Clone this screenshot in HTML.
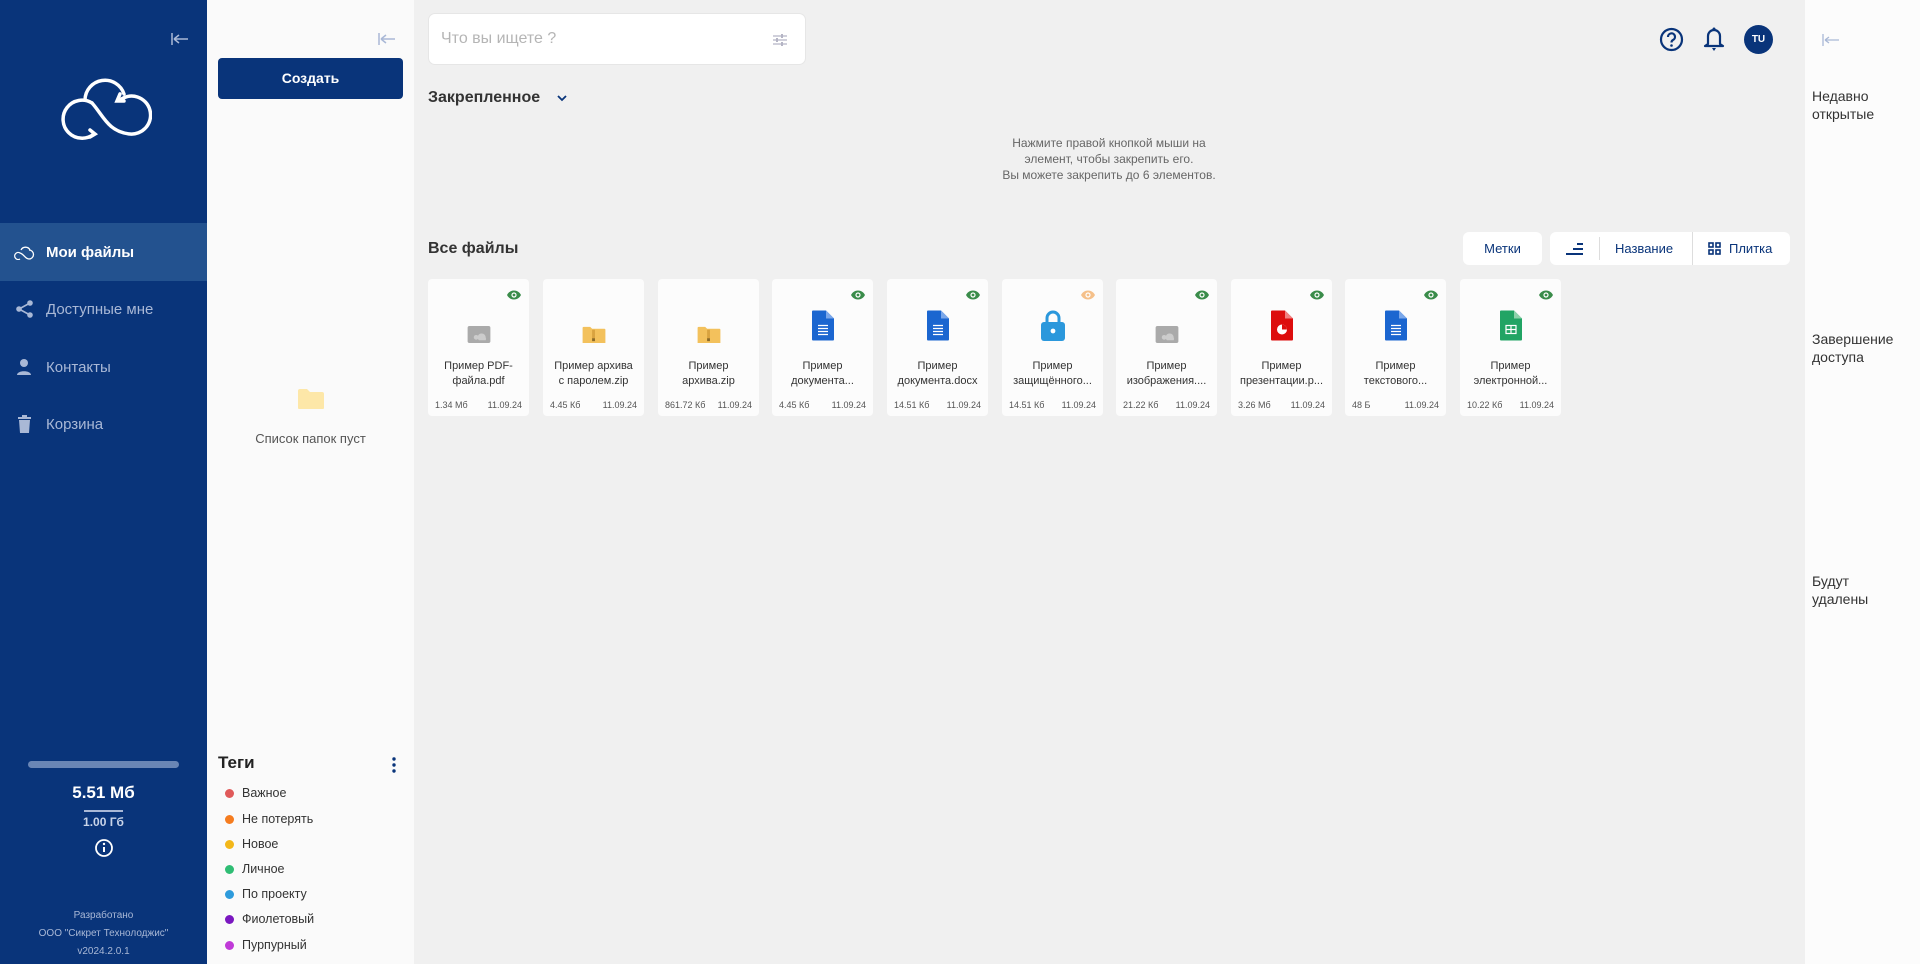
<!DOCTYPE html>
<html><head><meta charset="utf-8"><style>
*{box-sizing:border-box;margin:0;padding:0}
body{width:1920px;height:964px;overflow:hidden;font-family:"Liberation Sans","Noto Sans CJK SC",sans-serif;background:#f0f0f0;position:relative;color:#333}
.abs{position:absolute}
#side{left:0;top:0;width:207px;height:964px;background:#09347a}
#fold{left:207px;top:0;width:207px;height:964px;background:#fafafa}
#right{left:1805px;top:0;width:115px;height:964px;background:#fcfcfc}
.nav{position:absolute;left:0;width:207px;height:58px;display:flex;align-items:center;padding-left:14px;font-size:15px;color:#a9b8d6}
.nav svg{margin-right:10px}
.card{position:absolute;top:279px;width:101px;height:137px;background:#fcfcfc;border-radius:4px}
.card .t{position:absolute;top:80px;left:4px;right:4px;text-align:center;font-size:11px;line-height:15px;color:#333}
.card .m{position:absolute;top:121px;left:7px;right:7px;display:flex;justify-content:space-between;font-size:9px;color:#555}
.card .eye{position:absolute;right:8px;top:11px}
.card .ic{position:absolute;left:50%;top:31px;transform:translateX(-50%)}
.tag{position:absolute;left:225px;font-size:12.5px;color:#333;display:flex;align-items:center}
.tag i{width:9px;height:9px;border-radius:50%;margin-right:8px;display:inline-block}
.rt{position:absolute;left:1812px;font-size:14px;line-height:18px;color:#333}
</style></head><body>
<div id="side" class="abs">
 <svg class="abs" style="left:170px;top:32px" width="20" height="14" viewBox="0 0 20 14"><path d="M2 1v12M4 7h14M4 7l5-4M4 7l5 4" stroke="#a9b8d6" stroke-width="1.5" fill="none"/></svg>
 <svg class="abs" style="left:58px;top:70px" width="94" height="72" viewBox="0 0 94 72"><g stroke="#fff" stroke-width="3.5" fill="none" stroke-linecap="round"><path d="M27 30 A20 20 0 0 1 66 24"/><path d="M34 33 C45 45 50 62 72 64 A19 19 0 1 0 62 30"/><path d="M34 33 A19 19 0 1 0 36 64"/><path d="M32 60l5 4-5 3M62 24l-3 7 7 0"/></g></svg>
 <div class="nav" style="top:223px;background:#23528f;color:#fff;font-weight:bold"><svg width="22" height="16" viewBox="0 0 22 16"><path d="M7 6A5 5 0 0 1 16 6 M15 6a4.5 4.5 0 1 1 0 9c-4 0-5-5-9-6a3.5 3.5 0 1 0 0 6" stroke="#fff" stroke-width="1.3" fill="none"/></svg>Мои файлы</div>
 <div class="nav" style="top:280px"><svg width="22" height="20" viewBox="0 0 22 20"><circle cx="16" cy="4" r="2.8" fill="#a9b8d6"/><circle cx="5" cy="10" r="2.8" fill="#a9b8d6"/><circle cx="16" cy="16" r="2.8" fill="#a9b8d6"/><path d="M16 4L5 10l11 6" stroke="#a9b8d6" stroke-width="1.6" fill="none"/></svg>Доступные мне</div>
 <div class="nav" style="top:338px"><svg width="22" height="18" viewBox="0 0 22 18"><circle cx="10" cy="5" r="4" fill="#a9b8d6"/><path d="M3 17c0-5 14-5 14 0z" fill="#a9b8d6"/></svg>Контакты</div>
 <div class="nav" style="top:395px"><svg width="22" height="20" viewBox="0 0 22 20"><path d="M4 3h13v2H4zM8 1h5v2H8zM5 6h11l-1 13H6z" fill="#a9b8d6"/></svg>Корзина</div>
 <div class="abs" style="left:28px;top:761px;width:151px;height:7px;border-radius:4px;background:#6a86b5"></div>
 <div class="abs" style="left:0;width:207px;top:783px;text-align:center;color:#fff;font-weight:bold;font-size:17px">5.51 Мб</div>
 <div class="abs" style="left:84px;top:810px;width:39px;height:2px;background:#a9b8d6"></div>
 <div class="abs" style="left:0;width:207px;top:815px;text-align:center;color:#c9d4e8;font-weight:bold;font-size:12px">1.00 Гб</div>
 <svg class="abs" style="left:94px;top:838px" width="20" height="20" viewBox="0 0 20 20"><circle cx="10" cy="10" r="8" stroke="#fff" stroke-width="1.8" fill="none"/><path d="M10 9v5" stroke="#fff" stroke-width="2"/><circle cx="10" cy="6" r="1.2" fill="#fff"/></svg>
 <div class="abs" style="left:0;width:207px;top:907px;text-align:center;color:#a9b8d6;font-size:10px;line-height:18px">Разработано<br>ООО "Сикрет Технолоджис"<br>v2024.2.0.1</div>
</div>
<div id="fold" class="abs">
 <svg class="abs" style="left:170px;top:32px" width="20" height="14" viewBox="0 0 20 14"><path d="M2 1v12M4 7h14M4 7l5-4M4 7l5 4" stroke="#a9b8d6" stroke-width="1.5" fill="none"/></svg>
 <div class="abs" style="left:11px;top:58px;width:185px;height:41px;border-radius:4px;background:#09347a;color:#fff;font-weight:bold;font-size:14px;text-align:center;line-height:41px">Создать</div>
 <svg class="abs" style="left:90px;top:388px" width="28" height="22" viewBox="0 0 28 22"><path d="M1 3a2 2 0 0 1 2-2h7l3 3h12a2 2 0 0 1 2 2v14a1 1 0 0 1-1 1H2a1 1 0 0 1-1-1z" fill="#fde7a8"/></svg>
 <div class="abs" style="left:0;width:207px;top:431px;text-align:center;font-size:13px;color:#555">Список папок пуст</div>
 <div class="abs" style="left:11px;top:753px;font-size:17px;font-weight:bold;color:#222">Теги</div>
 <svg class="abs" style="left:184px;top:756px" width="6" height="18" viewBox="0 0 6 18"><circle cx="3" cy="3" r="1.7" fill="#09347a"/><circle cx="3" cy="9" r="1.7" fill="#09347a"/><circle cx="3" cy="15" r="1.7" fill="#09347a"/></svg>
</div>
<div class="tag" style="top:786px"><i style="background:#e05a5a"></i>Важное</div>
<div class="tag" style="top:812px"><i style="background:#f57c1f"></i>Не потерять</div>
<div class="tag" style="top:837px"><i style="background:#f3b719"></i>Новое</div>
<div class="tag" style="top:862px"><i style="background:#2fbd74"></i>Личное</div>
<div class="tag" style="top:887px"><i style="background:#2e9bdc"></i>По проекту</div>
<div class="tag" style="top:912px"><i style="background:#7a17c0"></i>Фиолетовый</div>
<div class="tag" style="top:938px"><i style="background:#c03ad8"></i>Пурпурный</div>

<div class="abs" style="left:428px;top:13px;width:378px;height:52px;background:#fff;border:1px solid #e6e6e6;border-radius:7px"></div>
<div class="abs" style="left:441px;top:30px;font-size:16px;color:#b5b5b5">Что вы ищете ?</div>
<svg class="abs" style="left:773px;top:33px" width="14" height="14" viewBox="0 0 14 14"><g stroke="#b5b5c5" stroke-width="1.2"><path d="M0 3h14M0 7h14M0 11h14"/></g><g fill="#b5b5c5"><rect x="8" y="1" width="2" height="4"/><rect x="3" y="5" width="2" height="4"/><rect x="8" y="9" width="2" height="4"/></g></svg>
<div class="abs" style="left:428px;top:89px;font-size:16px;font-weight:bold;color:#333">Закрепленное</div>
<svg class="abs" style="left:557px;top:94px" width="10" height="8" viewBox="0 0 10 8"><path d="M1 2l4 4 4-4" stroke="#09347a" stroke-width="1.8" fill="none"/></svg>
<div class="abs" style="left:909px;width:400px;top:135px;text-align:center;font-size:12px;line-height:16px;color:#666">Нажмите правой кнопкой мыши на<br>элемент, чтобы закрепить его.<br>Вы можете закрепить до 6 элементов.</div>
<div class="abs" style="left:428px;top:240px;font-size:16px;font-weight:bold;color:#333">Все файлы</div>

<svg class="abs" style="left:1659px;top:27px" width="25" height="25" viewBox="0 0 25 25"><circle cx="12.5" cy="12.5" r="10.5" stroke="#09347a" stroke-width="2.2" fill="none"/><path d="M9 10a3.5 3.5 0 1 1 5 3c-1.5.8-1.5 1.5-1.5 2.5" stroke="#09347a" stroke-width="2.2" fill="none"/><circle cx="12.5" cy="18.5" r="1.3" fill="#09347a"/></svg>
<svg class="abs" style="left:1703px;top:25px" width="22" height="28" viewBox="0 0 22 28"><path d="M5 19V11a6 6 0 0 1 12 0v8l3 2H2z" stroke="#09347a" stroke-width="2.2" fill="none" stroke-linejoin="round"/><path d="M9 23h4l-2 3z" fill="#09347a"/><circle cx="11" cy="4" r="1.5" fill="#09347a"/></svg>
<div class="abs" style="left:1744px;top:25px;width:29px;height:29px;border-radius:50%;background:#09347a;color:#fff;font-size:10px;font-weight:bold;text-align:center;line-height:29px">TU</div>

<div class="abs" style="left:1463px;top:232px;width:79px;height:33px;background:#fff;border-radius:6px;font-size:13px;color:#09347a;text-align:center;line-height:33px">Метки</div>
<div class="abs" style="left:1550px;top:232px;width:240px;height:33px;background:#fff;border-radius:6px"></div>
<svg class="abs" style="left:1566px;top:243px" width="18" height="12" viewBox="0 0 18 12"><path d="M11 1h6M7 6h10M0 11h17" stroke="#09347a" stroke-width="2"/></svg>
<div class="abs" style="left:1599px;top:237px;width:1px;height:23px;background:#ddd"></div>
<div class="abs" style="left:1615px;top:241px;font-size:13px;color:#09347a">Название</div>
<div class="abs" style="left:1692px;top:232px;width:1px;height:33px;background:#ddd"></div>
<svg class="abs" style="left:1708px;top:242px" width="13" height="13" viewBox="0 0 13 13"><g stroke="#09347a" stroke-width="1.6" fill="none"><rect x="1" y="1" width="4" height="4"/><rect x="8" y="1" width="4" height="4"/><rect x="1" y="8" width="4" height="4"/><rect x="8" y="8" width="4" height="4"/></g></svg>
<div class="abs" style="left:1729px;top:241px;font-size:13px;color:#09347a">Плитка</div>

<div id="right" class="abs">
 <svg class="abs" style="left:17px;top:34px" width="18" height="12" viewBox="0 0 18 12"><path d="M1 0v12M3 6h14M3 6l4-3M3 6l4 3" stroke="#a9b8d6" stroke-width="1.3" fill="none"/></svg>
</div>
<div class="rt" style="top:87px">Недавно<br>открытые</div>
<div class="rt" style="top:330px">Завершение<br>доступа</div>
<div class="rt" style="top:572px">Будут<br>удалены</div>

<svg width="0" height="0" style="position:absolute"><defs>
<symbol id="eye" viewBox="0 0 14 10"><path d="M0 5C3 -1 11 -1 14 5C11 11 3 11 0 5z" fill="currentColor"/><circle cx="7" cy="5" r="2.6" fill="#fff"/><circle cx="7" cy="5" r="1.4" fill="currentColor"/></symbol>
<symbol id="img" viewBox="0 0 24 20"><rect width="24" height="18" y="1" rx="2" fill="#aaa"/><circle cx="9" cy="13" r="2.5" fill="#ccc"/><path d="M12 16a4 4 0 0 1 3-7 4 4 0 0 1 4 4 3 3 0 0 1 0 3z" fill="#ccc"/></symbol>
<symbol id="zip" viewBox="0 0 24 20"><path d="M0 3a1 1 0 0 1 1-1h7l2 2h13a1 1 0 0 1 1 1v14H0z" fill="#f3c15c"/><rect x="10" y="5" width="3" height="10" fill="#d9a340"/><rect x="10" y="14" width="3" height="3" fill="#8a6a2a"/></symbol>
<symbol id="doc" viewBox="0 0 22 30"><path d="M0 1a1 1 0 0 1 1-1h13l8 8v21a1 1 0 0 1-1 1H1a1 1 0 0 1-1-1z" fill="#1b66d0"/><path d="M14 0v8h8z" fill="#7aa7ea"/><path d="M6 15h10M6 18h10M6 21h10M6 24h10" stroke="#fff" stroke-width="1.3"/></symbol>
<symbol id="ppt" viewBox="0 0 22 30"><path d="M0 1a1 1 0 0 1 1-1h13l8 8v21a1 1 0 0 1-1 1H1a1 1 0 0 1-1-1z" fill="#dd0d0d"/><path d="M14 0v8h8z" fill="#f08080"/><circle cx="11" cy="19" r="5" fill="#fff"/><path d="M11 19V14a5 5 0 0 1 5 5z" fill="#dd0d0d"/></symbol>
<symbol id="xls" viewBox="0 0 22 30"><path d="M0 1a1 1 0 0 1 1-1h13l8 8v21a1 1 0 0 1-1 1H1a1 1 0 0 1-1-1z" fill="#21a464"/><path d="M14 0v8h8z" fill="#8dd2ab"/><g stroke="#fff" stroke-width="1.2" fill="none"><rect x="6" y="15" width="10" height="8"/><path d="M6 19h10M11 15v8"/></g></symbol>
<symbol id="lock" viewBox="0 0 24 32"><path d="M6 13V8a6 6 0 0 1 12 0v5" stroke="#2b98dc" stroke-width="3" fill="none"/><rect y="12" width="24" height="19" rx="3" fill="#2b98dc"/><circle cx="12" cy="21" r="2.4" fill="#fff"/></symbol>
</defs></svg>

<div class="card" style="left:428px"><svg class="eye" width="14" height="10" style="color:#3a8c4a"><use href="#eye"/></svg><svg class="ic" style="top:46px" width="23" height="19"><use href="#img"/></svg><div class="t">Пример PDF-<br>файла.pdf</div><div class="m"><span>1.34 Мб</span><span>11.09.24</span></div></div>
<div class="card" style="left:543px"><svg class="ic" style="top:46px" width="23" height="19"><use href="#zip"/></svg><div class="t">Пример архива<br>с паролем.zip</div><div class="m"><span>4.45 Кб</span><span>11.09.24</span></div></div>
<div class="card" style="left:658px"><svg class="ic" style="top:46px" width="23" height="19"><use href="#zip"/></svg><div class="t">Пример<br>архива.zip</div><div class="m"><span>861.72 Кб</span><span>11.09.24</span></div></div>
<div class="card" style="left:772px"><svg class="eye" width="14" height="10" style="color:#3a8c4a"><use href="#eye"/></svg><svg class="ic" width="22" height="31"><use href="#doc"/></svg><div class="t">Пример<br>документа...</div><div class="m"><span>4.45 Кб</span><span>11.09.24</span></div></div>
<div class="card" style="left:887px"><svg class="eye" width="14" height="10" style="color:#3a8c4a"><use href="#eye"/></svg><svg class="ic" width="22" height="31"><use href="#doc"/></svg><div class="t">Пример<br>документа.docx</div><div class="m"><span>14.51 Кб</span><span>11.09.24</span></div></div>
<div class="card" style="left:1002px"><svg class="eye" width="14" height="10" style="color:#f5c08a"><use href="#eye"/></svg><svg class="ic" width="24" height="32"><use href="#lock"/></svg><div class="t">Пример<br>защищённого...</div><div class="m"><span>14.51 Кб</span><span>11.09.24</span></div></div>
<div class="card" style="left:1116px"><svg class="eye" width="14" height="10" style="color:#3a8c4a"><use href="#eye"/></svg><svg class="ic" style="top:46px" width="23" height="19"><use href="#img"/></svg><div class="t">Пример<br>изображения....</div><div class="m"><span>21.22 Кб</span><span>11.09.24</span></div></div>
<div class="card" style="left:1231px"><svg class="eye" width="14" height="10" style="color:#3a8c4a"><use href="#eye"/></svg><svg class="ic" width="22" height="31"><use href="#ppt"/></svg><div class="t">Пример<br>презентации.р...</div><div class="m"><span>3.26 Мб</span><span>11.09.24</span></div></div>
<div class="card" style="left:1345px"><svg class="eye" width="14" height="10" style="color:#3a8c4a"><use href="#eye"/></svg><svg class="ic" width="22" height="31"><use href="#doc"/></svg><div class="t">Пример<br>текстового...</div><div class="m"><span>48 Б</span><span>11.09.24</span></div></div>
<div class="card" style="left:1460px"><svg class="eye" width="14" height="10" style="color:#3a8c4a"><use href="#eye"/></svg><svg class="ic" width="22" height="31"><use href="#xls"/></svg><div class="t">Пример<br>электронной...</div><div class="m"><span>10.22 Кб</span><span>11.09.24</span></div></div>
</body></html>
